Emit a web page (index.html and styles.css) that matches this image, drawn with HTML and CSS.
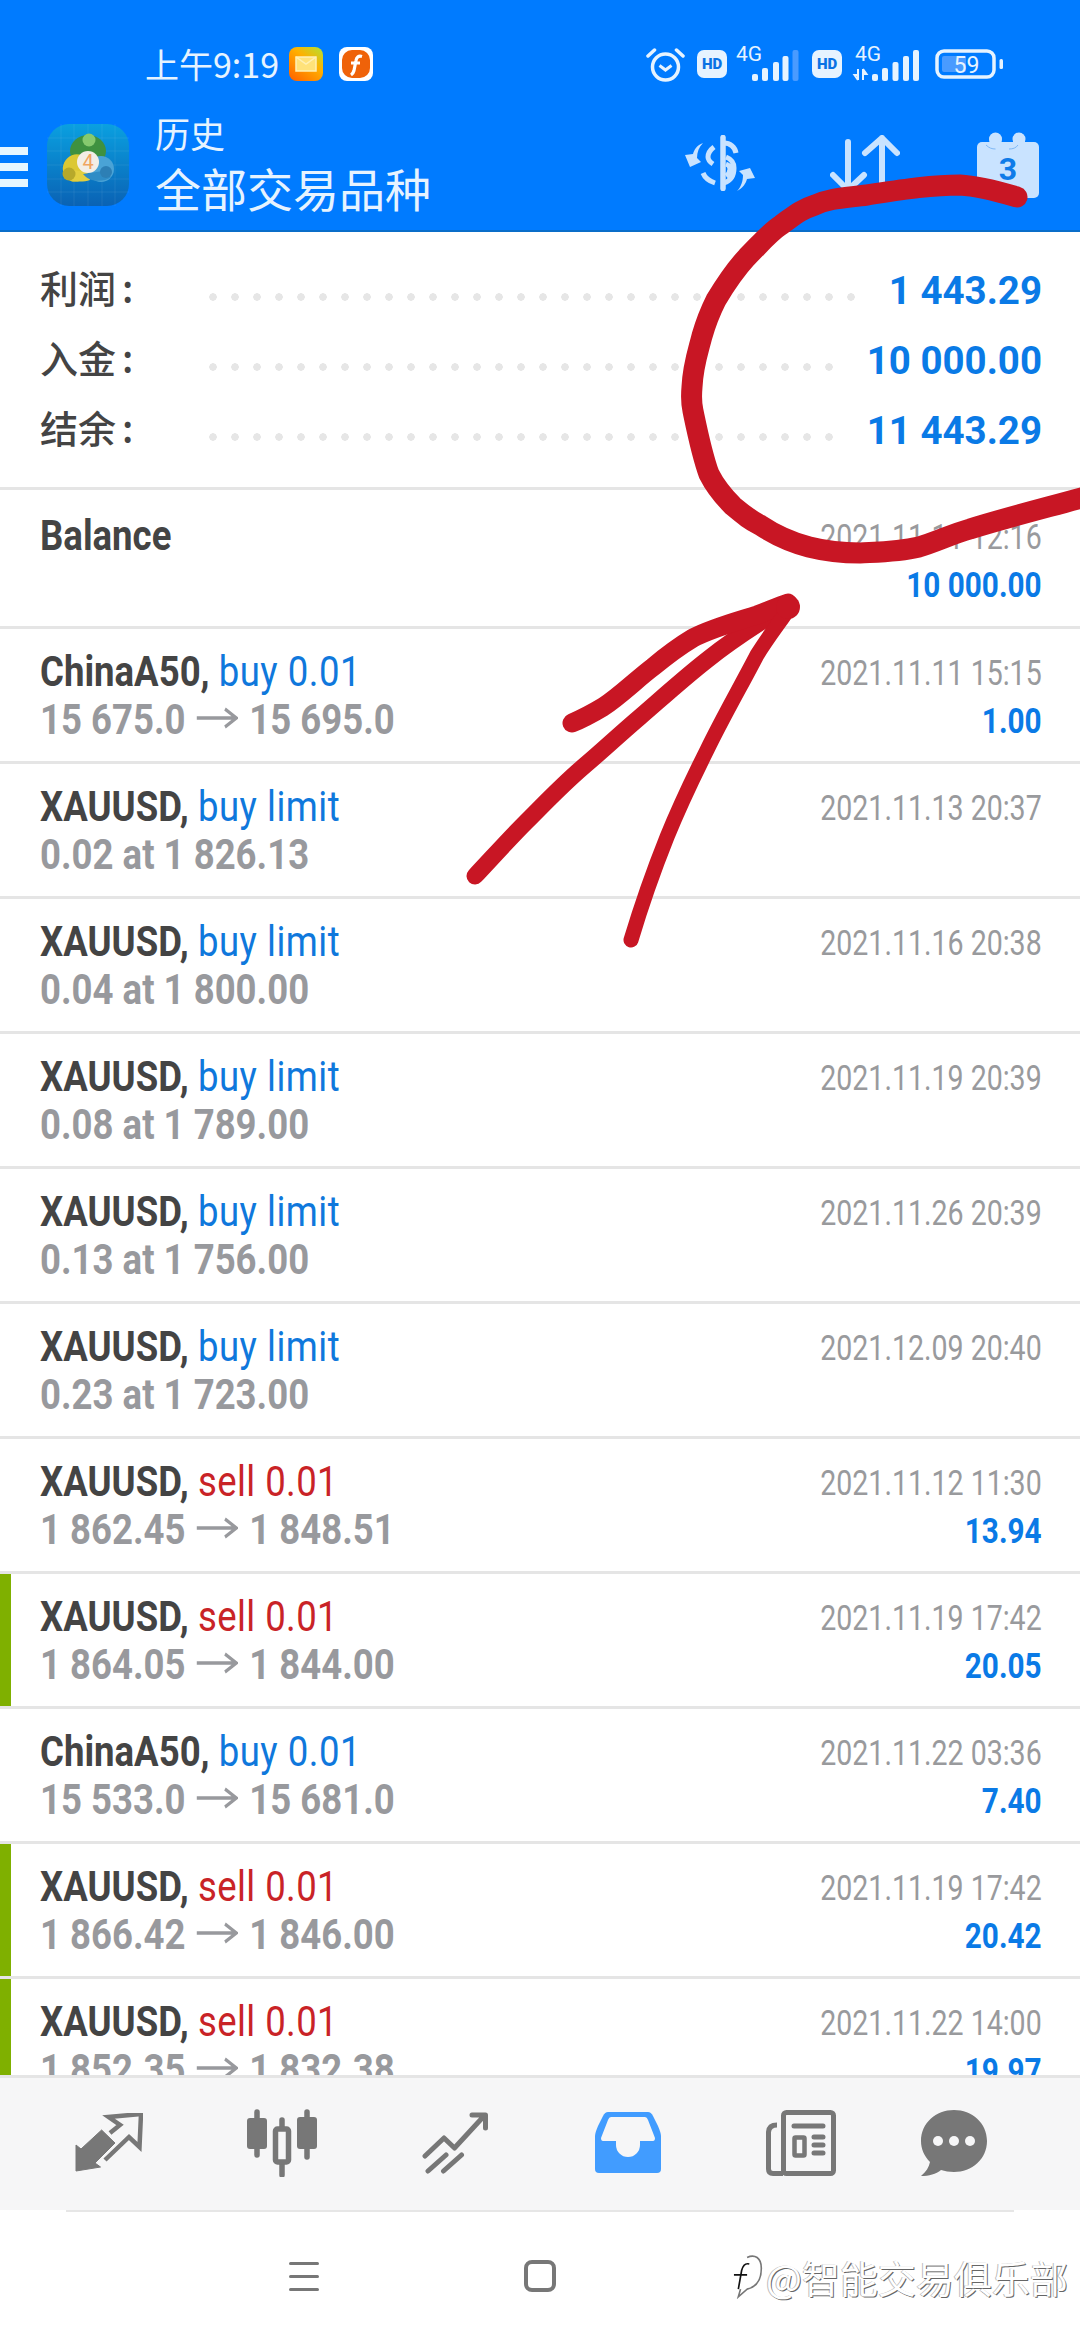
FILE: index.html
```html
<!DOCTYPE html>
<html lang="zh-CN">
<head>
    <meta charset="UTF-8">
    <title>历史</title>
    <link rel="stylesheet" href="styles.css">
</head>
<body>
<svg class="defs" width="0" height="0">
    <symbol id="to" viewBox="0 0 51 22" preserveAspectRatio="none">
        <path d="M0 11H49M35 2l14 9-14 9" fill="none" stroke="#98999d" stroke-width="3.5"/>
    </symbol>
</svg>

<div class="phone">
    <header class="top">
        <div class="status">
            <span class="clock">上午9:19</span>
            <svg class="mail" viewBox="0 0 34 34" width="34" height="34">
                <defs>
                    <linearGradient id="mailGrad" x1="0.1" y1="1" x2="0.9" y2="0">
                        <stop offset="0" stop-color="#ff6400"/>
                        <stop offset="0.6" stop-color="#ffb000"/>
                        <stop offset="1" stop-color="#b8dd30"/>
                    </linearGradient>
                </defs>
                <rect width="34" height="34" rx="8" fill="url(#mailGrad)"/>
                <rect x="7" y="10" width="20" height="14" fill="#ffe27a" stroke="#fff0b5" stroke-width="1.5"/>
                <path d="M7 10l10 7 10-7" fill="none" stroke="#fff0b5" stroke-width="1.5"/>
            </svg>
            <svg class="fapp" viewBox="0 0 34 34" width="34" height="34">
                <rect width="34" height="34" rx="8" fill="#fff"/>
                <rect x="3" y="3" width="28" height="28" rx="10" fill="#ef6209"/>
                <path d="M23 9.500c-3.500-1-5.500 0.500-6 4l-2 10c-0.500 2-1.500 3.500-3 4.500M12 16h9" fill="none" stroke="#fff" stroke-width="3.200"/>
            </svg>

            <svg class="alarm" viewBox="0 0 39 36" width="39" height="36">
                <circle cx="19.500" cy="21" r="13" fill="none" stroke="#e6f3ff" stroke-width="3.500"/>
                <path d="M13.500 19.500l6 4.500 6-4.500" fill="none" stroke="#e6f3ff" stroke-width="3"/>
                <path d="M2 10l6.500-6M37 10l-6.500-6" fill="none" stroke="#e6f3ff" stroke-width="3.500" stroke-linecap="round"/>
            </svg>
            <span class="hd">HD</span>
            <svg class="sig1" viewBox="0 0 64 34" width="64" height="34">
                <text x="0" y="14" class="net">4G</text>
                <rect x="16" y="27" width="6" height="7" rx="2" fill="#e6f3ff"/>
                <rect x="26" y="21" width="6" height="13" rx="2" fill="#e6f3ff"/>
                <rect x="37" y="15" width="6" height="19" rx="2" fill="#e6f3ff"/>
                <rect x="46.500" y="9" width="6" height="25" rx="2" fill="#e6f3ff"/>
                <rect x="56.500" y="3" width="6" height="31" rx="2" fill="#4a9bff"/>
            </svg>
            <span class="hd hd2">HD</span>
            <svg class="sig2" viewBox="0 0 68 34" width="68" height="34">
                <text x="2" y="14" class="net">4G</text>
                <path d="M5 22v11M5 33l-3.500-5h3.500M10 33V22M10 22l3.500 5H10" fill="none" stroke="#e6f3ff" stroke-width="2"/>
                <rect x="19" y="27" width="6" height="7" rx="2" fill="#e6f3ff"/>
                <rect x="29" y="21" width="6" height="13" rx="2" fill="#e6f3ff"/>
                <rect x="39.500" y="15" width="6" height="19" rx="2" fill="#e6f3ff"/>
                <rect x="50" y="9" width="6" height="25" rx="2" fill="#e6f3ff"/>
                <rect x="60" y="3" width="6" height="31" rx="2" fill="#e6f3ff"/>
            </svg>
            <svg class="batt" viewBox="0 0 68 30" width="68" height="30">
                <rect x="2" y="2" width="57" height="26" rx="7" fill="none" stroke="#e6f3ff" stroke-width="3.500"/>
                <rect x="7" y="7" width="24" height="16" rx="2" fill="#4a9bff"/>
                <text x="18.500" y="24" class="batt-num">59</text>
                <rect x="64.500" y="10" width="3.500" height="10" rx="1.500" fill="#e6f3ff"/>
            </svg>
        </div>

        <div class="appbar">
            <div class="burger"><i></i><i></i><i></i></div>
            <svg class="logo" viewBox="0 0 82 82" width="82" height="82">
                <defs>
                    <linearGradient id="logoBg" x1="0" y1="0" x2="0" y2="1">
                        <stop offset="0" stop-color="#0aa0e0"/>
                        <stop offset="1" stop-color="#0a62b4"/>
                    </linearGradient>
                </defs>
                <rect width="82" height="82" rx="22" fill="url(#logoBg)"/>
                <path d="M14 0V82M27 0V82M41 0V82M55 0V82M68 0V82M0 14H82M0 27H82M0 41H82M0 55H82M0 68H82" stroke="#fff" stroke-opacity="0.07"/>
                <ellipse cx="41" cy="27" rx="18" ry="16" fill="#3f9140"/>
                <circle cx="42" cy="16" r="6.500" fill="#86c96f"/>
                <ellipse cx="29" cy="44" rx="13" ry="14" transform="rotate(25 29 44)" fill="#dcc834"/>
                <path d="M16 50c5 8 18 9 27 6l-3-8-14-2z" fill="#e3cf3f"/>
                <circle cx="22" cy="50" r="6.500" fill="#b7a92b"/>
                <ellipse cx="54" cy="45" rx="13" ry="13" fill="#4aa3d6"/>
                <path d="M36 50c6 8 20 9 28 3l-8-6z" fill="#2f8cc6"/>
                <circle cx="59" cy="48" r="6" fill="#2d7fb5"/>
                <circle cx="41" cy="38" r="11" fill="#f3eee6"/>
                <text x="41" y="45" class="logo-num">4</text>
            </svg>
            <div class="titles">
                <div class="title-small">历史</div>
                <div class="title-big">全部交易品种</div>
            </div>
            <svg class="act-money" viewBox="0 0 72 56" width="72" height="56">
                <path d="M39 2.500V53.500" fill="none" stroke="#c9e3ff" stroke-width="5.500" stroke-linecap="round"/>
                <path d="M40 8c6 0 11 4 12 10M42 22c5 2 8 5 8 11 0 8-4 13-10 15M42 29c3 1 4 3 4 5 0 3-1 5-4 7" fill="none" stroke="#c9e3ff" stroke-width="5"/>
                <path d="M30 12c-4 3-6 6-6 10 0 3 2 5 5 7M19 38c2 5 6 8 12 10" fill="none" stroke="#c9e3ff" stroke-width="5"/>
                <path d="M19 8C13 10 10 15 9 19L1 20 6 32 17 27 13 23C13 17 15 12 19 8Z" fill="#c9e3ff"/>
                <path d="M53 56C59 53 62 48 63 44L71 43 66 33 55 36 59 40C59 46 57 52 53 56Z" fill="#c9e3ff"/>
            </svg>
            <svg class="act-sort" viewBox="0 0 70 60" width="70" height="60">
                <path d="M18 7V55M3 40l15 15 16-15M52 3V55M35 18L52 3l15 15" fill="none" stroke="#c9e3ff" stroke-width="6" stroke-linecap="round" stroke-linejoin="round"/>
            </svg>
            <svg class="act-cal" viewBox="0 0 62 66" width="62" height="66">
                <rect y="10" width="62" height="56" rx="5" fill="#c9e3ff"/>
                <circle cx="18.500" cy="7" r="6.500" fill="#c9e3ff"/>
                <circle cx="42" cy="7" r="6.500" fill="#c9e3ff"/>
                <path d="M18.500 7V14M42 7V14" stroke="#c9e3ff" stroke-width="12" stroke-linecap="round"/>
                <path d="M9 13c3 3 6 4 9.500 4M32 17c4 0 7-1 9-4" fill="none" stroke="#7fb8f5" stroke-width="1"/>
                <text x="31" y="48" class="cal-num">3</text>
            </svg>
        </div>
    </header>

    <section class="summary">
        <div class="sum-row">
            <span class="sum-label">利润<span class="colon">:</span></span>
            <span class="dots"></span>
            <span class="sum-value">1 443.29</span>
        </div>
        <div class="sum-row">
            <span class="sum-label">入金<span class="colon">:</span></span>
            <span class="dots"></span>
            <span class="sum-value">10 000.00</span>
        </div>
        <div class="sum-row">
            <span class="sum-label">结余<span class="colon">:</span></span>
            <span class="dots"></span>
            <span class="sum-value">11 443.29</span>
        </div>
    </section>

    <main class="list">
        <div class="row row-balance">
            <div class="left"><div class="line name"><b>Balance</b></div></div>
            <div class="right">
                <div class="line date">2021.11.11 12:16</div>
                <div class="line amount">10 000.00</div>
            </div>
        </div>
        <div class="row">
            <div class="left">
                <div class="line name"><b>ChinaA50,</b> <span class="buy">buy 0.01</span></div>
                <div class="line sub">15 675.0<svg class="to"><use href="#to"/></svg>15 695.0</div>
            </div>
            <div class="right">
                <div class="line date">2021.11.11 15:15</div>
                <div class="line amount">1.00</div>
            </div>
        </div>
        <div class="row">
            <div class="left">
                <div class="line name"><b>XAUUSD,</b> <span class="buy">buy limit</span></div>
                <div class="line sub">0.02 at 1 826.13</div>
            </div>
            <div class="right"><div class="line date">2021.11.13 20:37</div></div>
        </div>
        <div class="row">
            <div class="left">
                <div class="line name"><b>XAUUSD,</b> <span class="buy">buy limit</span></div>
                <div class="line sub">0.04 at 1 800.00</div>
            </div>
            <div class="right"><div class="line date">2021.11.16 20:38</div></div>
        </div>
        <div class="row">
            <div class="left">
                <div class="line name"><b>XAUUSD,</b> <span class="buy">buy limit</span></div>
                <div class="line sub">0.08 at 1 789.00</div>
            </div>
            <div class="right"><div class="line date">2021.11.19 20:39</div></div>
        </div>
        <div class="row">
            <div class="left">
                <div class="line name"><b>XAUUSD,</b> <span class="buy">buy limit</span></div>
                <div class="line sub">0.13 at 1 756.00</div>
            </div>
            <div class="right"><div class="line date">2021.11.26 20:39</div></div>
        </div>
        <div class="row">
            <div class="left">
                <div class="line name"><b>XAUUSD,</b> <span class="buy">buy limit</span></div>
                <div class="line sub">0.23 at 1 723.00</div>
            </div>
            <div class="right"><div class="line date">2021.12.09 20:40</div></div>
        </div>
        <div class="row">
            <div class="left">
                <div class="line name"><b>XAUUSD,</b> <span class="sell">sell 0.01</span></div>
                <div class="line sub">1 862.45<svg class="to"><use href="#to"/></svg>1 848.51</div>
            </div>
            <div class="right">
                <div class="line date">2021.11.12 11:30</div>
                <div class="line amount">13.94</div>
            </div>
        </div>
        <div class="row marked">
            <div class="left">
                <div class="line name"><b>XAUUSD,</b> <span class="sell">sell 0.01</span></div>
                <div class="line sub">1 864.05<svg class="to"><use href="#to"/></svg>1 844.00</div>
            </div>
            <div class="right">
                <div class="line date">2021.11.19 17:42</div>
                <div class="line amount">20.05</div>
            </div>
        </div>
        <div class="row">
            <div class="left">
                <div class="line name"><b>ChinaA50,</b> <span class="buy">buy 0.01</span></div>
                <div class="line sub">15 533.0<svg class="to"><use href="#to"/></svg>15 681.0</div>
            </div>
            <div class="right">
                <div class="line date">2021.11.22 03:36</div>
                <div class="line amount">7.40</div>
            </div>
        </div>
        <div class="row marked">
            <div class="left">
                <div class="line name"><b>XAUUSD,</b> <span class="sell">sell 0.01</span></div>
                <div class="line sub">1 866.42<svg class="to"><use href="#to"/></svg>1 846.00</div>
            </div>
            <div class="right">
                <div class="line date">2021.11.19 17:42</div>
                <div class="line amount">20.42</div>
            </div>
        </div>
        <div class="row marked">
            <div class="left">
                <div class="line name"><b>XAUUSD,</b> <span class="sell">sell 0.01</span></div>
                <div class="line sub">1 852.35<svg class="to"><use href="#to"/></svg>1 832.38</div>
            </div>
            <div class="right">
                <div class="line date">2021.11.22 14:00</div>
                <div class="line amount">19.97</div>
            </div>
        </div>
    </main>

    <nav class="tabs">
        <div class="tab">
            <svg viewBox="0 0 68 60" width="68" height="60">
                <path d="M1 58V32L6 36 26.600 17 40 30 20 50 25.500 54Z" fill="#777" stroke="#777" stroke-width="1" stroke-linejoin="round"/>
                <path d="M35 20L45 12 33.500 4 66 1 64.500 34 54 24 30 47" fill="none" stroke="#777" stroke-width="4.500"/>
            </svg>
        </div>
        <div class="tab">
            <svg viewBox="0 0 70 68" width="70" height="68">
                <path d="M10 3V46M60 3V48M35 11V66" fill="none" stroke="#777" stroke-width="5.500" stroke-linecap="round"/>
                <rect y="9" width="20" height="31" rx="3" fill="#777"/>
                <rect x="50" y="8" width="20" height="32" rx="3" fill="#777"/>
                <rect x="28.500" y="20" width="13" height="33" rx="2" fill="#f6f6f7" stroke="#777" stroke-width="5.500"/>
            </svg>
        </div>
        <div class="tab">
            <svg viewBox="0 0 66 62" width="66" height="62">
                <path d="M3 44L22 26 32.500 36 62 4M50 3H63.500V16M6 59L24 43M21.500 59L39.500 43" fill="none" stroke="#777" stroke-width="5" stroke-linecap="round" stroke-linejoin="round"/>
            </svg>
        </div>
        <div class="tab">
            <svg viewBox="0 0 66 61" width="66" height="61">
                <path d="M13 0H53Q56 0 58 4L63 14Q66 21 66 24V57Q66 61 62 61H4Q0 61 0 57V24Q0 21 3 14L8 4Q10 0 13 0Z" fill="#419cff"/>
                <path d="M16 5H50Q52 5 53 8L60 26Q60 29 58 29H45V33A12 12 0 0 1 21 33V29H8Q6 29 6 26L13 8Q14 5 16 5Z" fill="#f6f6f7"/>
            </svg>
        </div>
        <div class="tab">
            <svg viewBox="0 0 70 66" width="70" height="66">
                <rect x="17.500" y="2.500" width="50" height="61" rx="3" fill="none" stroke="#777" stroke-width="5"/>
                <path d="M11 15Q3 15 2.500 22V59Q2.500 63.500 7 63.500H17" fill="none" stroke="#777" stroke-width="5"/>
                <path d="M28 16H57M48 27H57M48 35H57M48 43H57" fill="none" stroke="#777" stroke-width="5" stroke-linecap="round"/>
                <rect x="28.500" y="27.500" width="10" height="18" rx="1" fill="none" stroke="#777" stroke-width="4.500"/>
            </svg>
        </div>
        <div class="tab tab-chat">
            <svg viewBox="0 0 66 66" width="66" height="66">
                <path d="M33 0C51 0 66 13 66 31S51 62 33 62C28 62 24 61 20 60 15 64 8 66 0 66 5 62 8 57 9 52 3 46 0 39 0 31 0 13 15 0 33 0Z" fill="#777"/>
                <circle cx="17" cy="31" r="5" fill="#f6f6f7"/>
                <circle cx="33" cy="31" r="5" fill="#f6f6f7"/>
                <circle cx="49" cy="31" r="5" fill="#f6f6f7"/>
            </svg>
        </div>
    </nav>
    <div class="hairline"></div>
    <footer class="sysnav">
        <div class="menu-key"><i></i><i></i><i></i></div>
        <div class="home-key"></div>
        <svg class="mark" viewBox="0 0 32 42" width="32" height="42">
            <path d="M17 4C24 1 30 4 30 14 30 24 26 31 17 33L9 40 11 33" fill="none" stroke="#777" stroke-width="1.500"/>
            <path d="M19 10C15 9 13 12 12 16L9 33M5 20H17" fill="none" stroke="#111" stroke-width="1.500"/>
        </svg>
        <span class="watermark">@智能交易俱乐部</span>
    </footer>

    <!-- hand drawn marks on top of the screenshot -->
    <svg class="ink" viewBox="0 0 1080 2340" width="1080" height="2340">
        <path d="M1017 197C1000 192 980 186 960 185 930 185 900 190 867 195 845 198 830 198 815 205 800 210 795 215 781 225 770 232 760 244 747 257 735 270 725 285 716 300 710 312 706 322 702 336 698 352 693 365 692 387 691 398 691 402 693 411 698 435 702 455 709 474 716 488 724 497 733 506 745 516 750 520 760 525 775 535 790 542 809 547 825 551 842 553 860 553 880 552 898 552 919 547 936 542 952 534 970 529 1005 518 1045 508 1085 497" fill="none" stroke="#c81624" stroke-width="21" stroke-linecap="round" stroke-linejoin="round"/>
        <path d="M475 876C492 858 508 840 527 821 545 803 562 785 583 767 602 751 620 734 640 717 662 698 684 678 707 660 732 640 760 622 788 605" fill="none" stroke="#c81624" stroke-width="17" stroke-linecap="round"/>
        <path d="M572 723C584 718 593 713 603 707 620 696 637 679 653 667 665 657 678 647 693 638 712 628 735 622 757 615 768 611 778 606 788 603" fill="none" stroke="#c81624" stroke-width="19" stroke-linecap="round"/>
        <path d="M631 940C640 910 653 872 667 837 680 805 692 780 707 750 723 717 742 684 757 655 768 637 780 622 790 607" fill="none" stroke="#c81624" stroke-width="15" stroke-linecap="round"/>
        <circle cx="788" cy="607" r="12" fill="#c81624"/>
    </svg>
</div>
</body>
</html>
```

FILE: styles.css
```css
body {
    margin: 0;
    font-family: Roboto, "Noto Sans CJK SC", sans-serif;
}
.defs {
    display: block;
    height: 0;
}
.phone {
    position: relative;
    display: flex;
    flex-direction: column;
    width: 1080px;
    height: 2340px;
    overflow: hidden;
    background: #fff;
}

/* header */
.top {
    flex: none;
    height: 232px;
    box-sizing: border-box;
    background: #007bff;
    border-bottom: 2px solid #0a6ec9;
}
.status {
    display: flex;
    align-items: center;
    box-sizing: border-box;
    height: 110px;
    padding: 47px 77px 29px 145px;
    color: #e6f3ff;
}
.clock {
    font-family: "Noto Sans CJK SC", sans-serif;
    font-size: 34px;
    line-height: 34px;
    white-space: nowrap;
}
.mail {
    margin-left: 10px;
}
.fapp {
    margin-left: 16px;
}
.alarm {
    margin-left: auto;
}
.hd {
    width: 30px;
    height: 28px;
    margin-left: 12px;
    border-radius: 7px;
    background: #e6f3ff;
    color: #0a72e4;
    font-size: 15px;
    font-weight: 900;
    line-height: 28px;
    text-align: center;
}
.sig1 {
    margin-left: 9px;
    overflow: visible;
}
.sig2 {
    margin-left: 11px;
    overflow: visible;
}
.batt {
    margin-left: 14px;
}
.net {
    fill: #e6f3ff;
    font-family: Roboto, sans-serif;
    font-size: 21px;
}
.batt-num {
    fill: #e6f3ff;
    font-family: Roboto, sans-serif;
    font-size: 23px;
}
.appbar {
    display: flex;
    align-items: flex-start;
    height: 120px;
    padding-right: 41px;
}
.burger {
    display: flex;
    flex-direction: column;
    gap: 8px;
    width: 28px;
    margin-top: 37px;
}
.burger i {
    display: block;
    height: 8px;
    background: #e6f6ff;
}
.logo {
    flex: none;
    margin: 14px 0 0 19px;
}
.logo-num {
    fill: #f0a560;
    font-family: Roboto, sans-serif;
    font-size: 20px;
    text-anchor: middle;
}
.titles {
    margin-left: 26px;
    color: #e6f3ff;
    font-family: "Noto Sans CJK SC", sans-serif;
}
.title-small {
    font-size: 35px;
    line-height: 46px;
}
.title-big {
    font-size: 46px;
    line-height: 62px;
    white-space: nowrap;
}
.act-money {
    margin: 25px 0 0 auto;
}
.act-sort {
    margin: 25px 0 0 74px;
}
.act-cal {
    margin: 22px 0 0 77px;
}
.cal-num {
    fill: #0f7be8;
    font-family: Roboto, sans-serif;
    font-size: 32px;
    font-weight: 700;
    text-anchor: middle;
}

/* totals */
.summary {
    flex: none;
    box-sizing: border-box;
    height: 258px;
    padding: 23px 38px 0 40px;
    border-bottom: 3px solid #e5e5e5;
}
.sum-row {
    display: flex;
    align-items: center;
    height: 70px;
}
.sum-label {
    flex: none;
    width: 162px;
    margin-bottom: 8px;
    color: #444;
    font-family: "Noto Sans CJK SC", sans-serif;
    font-size: 38px;
    font-weight: 500;
}
.colon {
    margin-left: 6px;
}
.dots {
    flex: 1;
    height: 8px;
    margin-top: 14px;
    background: radial-gradient(circle, #e6e6e6 3.5px, transparent 4px) 0 0 / 22px 8px repeat-x;
}
.sum-value {
    margin-left: 26px;
    color: #0a7ae6;
    font-size: 38.500px;
    font-weight: 700;
    white-space: nowrap;
}

/* deals */
.list {
    flex: 1;
    min-height: 0;
    overflow: hidden;
}
.row {
    display: flex;
    justify-content: space-between;
    box-sizing: border-box;
    height: 135px;
    padding: 18px 38px 0 40px;
    border-bottom: 3px solid #e5e5e5;
}
.row-balance {
    height: 139px;
    padding-top: 21px;
}
.marked {
    background: linear-gradient(#7fb000, #7fb000) 0 0 / 11px 100% no-repeat;
}
.line {
    height: 48px;
    line-height: 48px;
    white-space: nowrap;
}
.left .line {
    font-size: 43px;
    transform: scaleX(0.85);
    transform-origin: left;
}
.right {
    margin-top: 3px;
    text-align: right;
}
.right .line {
    font-size: 35px;
    transform: scaleX(0.815);
    transform-origin: right;
}
.right .amount {
    transform: scaleX(0.85);
}
.name b {
    color: #444;
}
.buy {
    color: #0f78dc;
    letter-spacing: 0.6px;
}
.sell {
    color: #c92327;
    letter-spacing: 0.5px;
}
.sub {
    color: #98999d;
    font-weight: 700;
}
.to {
    width: 49px;
    height: 22px;
    margin: 0 13px;
    vertical-align: 5px;
}
.date {
    color: #999a9d;
}
.amount {
    color: #0a7ae6;
    font-weight: 700;
}

/* bottom bars */
.tabs {
    flex: none;
    display: flex;
    align-items: center;
    box-sizing: border-box;
    height: 135px;
    padding: 0 0 3px 22px;
    background: #f6f6f7;
    border-top: 3px solid #e5e5e5;
}
.tab {
    display: flex;
    justify-content: center;
    flex: none;
    width: 173px;
}
.tab-chat {
    margin-left: -20px;
}
.hairline {
    flex: none;
    height: 2px;
    margin: 0 66px;
    background: #e6e6e6;
}
.sysnav {
    flex: none;
    display: flex;
    align-items: center;
    height: 128px;
    padding-left: 289px;
}
.menu-key {
    display: flex;
    flex-direction: column;
    gap: 10px;
    width: 30px;
}
.menu-key i {
    display: block;
    height: 3px;
    border-radius: 2px;
    background: #777;
}
.home-key {
    box-sizing: border-box;
    width: 32px;
    height: 32px;
    margin-left: 205px;
    border: 4px solid #777;
    border-radius: 8px;
}
.mark {
    width: 36px;
    height: 46px;
    margin-left: 172px;
}
.watermark {
    margin-left: 2px;
    color: #fff;
    font-family: "Noto Sans CJK SC", sans-serif;
    font-size: 38px;
    white-space: nowrap;
    text-shadow: 1px 1px 0 #666, -1px 0 0 #bbb;
}

/* red pen on top */
.ink {
    position: absolute;
    top: 0;
    left: 0;
    pointer-events: none;
}
```
